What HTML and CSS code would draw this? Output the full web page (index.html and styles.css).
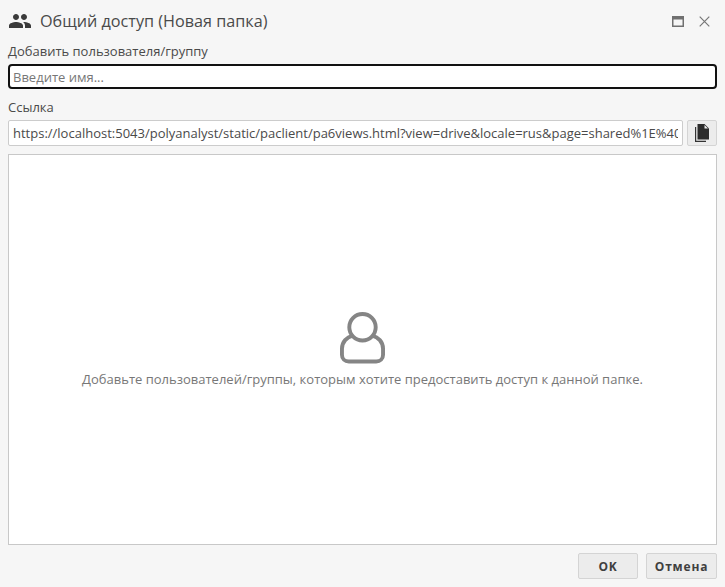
FILE: index.html
```html
<!DOCTYPE html>
<html lang="ru">
<head>
<meta charset="utf-8">
<title>Общий доступ</title>
<link rel="stylesheet" href="styles.css">
</head>
<body>
<div class="dialog">
  <header class="titlebar">
    <svg class="title-icon" width="24" height="24" viewBox="0 0 24 24"><path d="M16 11c1.66 0 2.99-1.34 2.99-3S17.66 5 16 5s-3 1.34-3 3 1.34 3 3 3zm-8 0c1.66 0 2.99-1.34 2.99-3S9.66 5 8 5 5 6.34 5 8s1.34 3 3 3zm0 2c-2.33 0-7 1.17-7 3.5V19h14v-2.5C15 14.17 10.33 13 8 13zm8 0c-.29 0-.62.02-.97.05 1.16.84 1.97 1.97 1.97 3.45V19h6v-2.500c0-2.330-4.670-3.500-7-3.500z"/></svg>
    <span class="title">Общий доступ (Новая папка)</span>
    <svg class="win-icon" width="12" height="11" viewBox="0 0 12 11"><path fill-rule="evenodd" d="M0 0h12v11H0zM1.500 3.500v6h9v-6z"/></svg>
    <svg class="win-icon close" width="11" height="11" viewBox="0 0 11 11"><path d="M.7.7l9.600 9.600M10.300.7L.7 10.300" fill="none" stroke="#777" stroke-width="1.200"/></svg>
  </header>
  <label class="label">Добавить пользователя/группу</label>
  <input class="field focused" type="text" placeholder="Введите имя...">
  <label class="label second">Ссылка</label>
  <div class="link-row">
    <input class="field link" type="text" value="https://localhost:5043/polyanalyst/static/paclient/pa6views.html?view=drive&amp;locale=rus&amp;page=shared%1E%40%1E%40">
    <button class="copy" type="button" aria-label="Копировать">
      <svg width="15" height="18" viewBox="0 0 15 18"><path d="M.6 3v14.400H11" fill="none" stroke="#333" stroke-width="1.200"/><path d="M2.500 0H9.500L14 4.500V15.500H2.500z" fill="#2b2b2b"/><path d="M9.500 1v3.500H13z" fill="#eee"/></svg>
    </button>
  </div>
  <main class="panel">
    <svg class="person" width="45" height="52" viewBox="0 0 46 52"><g fill="none" stroke="#858585" stroke-width="4"><circle cx="23" cy="15" r="13.500"/><path d="M13 23.500C7 25 2 30 2 37v6c0 4.500 3 7 7 7h28c4 0 7-2.500 7-7v-6c0-7-5-12-11-13.500"/></g></svg>
    <p class="hint">Добавьте пользователей/группы, которым хотите предоставить доступ к данной папке.</p>
  </main>
  <footer class="actions">
    <button class="btn ok" type="button">OK</button>
    <button class="btn cancel" type="button">Отмена</button>
  </footer>
</div>
</body>
</html>
```

FILE: styles.css
```css
* { box-sizing: border-box; }
html, body { margin: 0; height: 100%; }
body { background: #f6f6f6; font-family: "Open Sans", sans-serif; color: #444; overflow: hidden; }
.dialog { display: flex; flex-direction: column; width: 725px; height: 587px; padding: 8px; }
.titlebar { display: flex; align-items: center; height: 26px; }
.title-icon { fill: #3a3a3a; flex: none; }
.title { margin-left: 8px; font-size: 16.200px; line-height: 26px; color: #4a4a4a; flex: 1; }
.win-icon { fill: #707070; flex: none; }
.close { margin-left: 15px; margin-right: 7px; }
.label { display: block; font-size: 13px; line-height: 17px; margin-top: 9px; height: 21px; color: #4a4a4a; }
.label.second { margin-top: 10px; }
.field { display: block; width: 100%; height: 26px; padding: 0 4px; font: 13px "Open Sans", sans-serif; color: #4a4a4a; background: #fff; border: 1px solid #ccc; border-radius: 2px; outline: none; }
.field::placeholder { color: #777; opacity: 1; }
.focused { height: 25px; border: 2px solid #111; border-radius: 4px; padding: 0 3px; }
.link-row { display: flex; gap: 4px; }
.link { flex: 1; min-width: 0; }
.copy { width: 30px; height: 26px; padding: 0; display: flex; align-items: center; justify-content: center; background: #ececec; border: 1px solid #d4d4d4; border-radius: 2px; }
.panel { flex: 1; margin-top: 8px; background: #fff; border: 1px solid #c8c8c8; display: flex; flex-direction: column; align-items: center; justify-content: center; padding-bottom: 2px; }
.person { display: block; margin-top: 2px; }
.hint { margin: 7px 0 0; font-size: 13px; line-height: 17px; color: #777; }
.actions { display: flex; justify-content: flex-end; gap: 8px; margin-top: 8px; height: 26px; }
.btn { height: 26px; padding: 0; font: 700 12px "Open Sans", sans-serif; letter-spacing: .8px; color: #3f3f3f; background: #ececec; border: 1px solid #d4d4d4; border-radius: 2px; }
.ok { width: 60px; }
.cancel { width: 71px; }
```
